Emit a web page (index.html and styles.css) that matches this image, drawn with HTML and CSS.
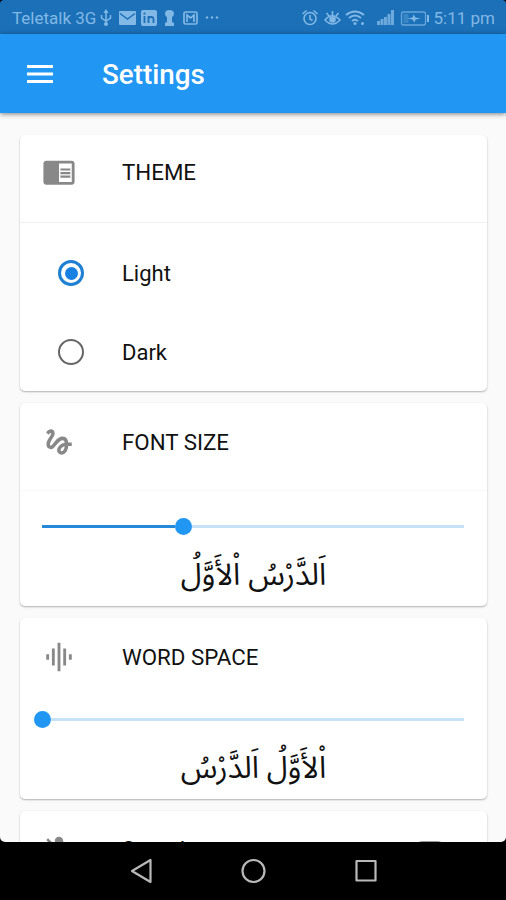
FILE: index.html
```html
<!DOCTYPE html>
<html lang="en">
<head>
<meta charset="utf-8">
<title>Settings</title>
<link rel="stylesheet" href="styles.css">
</head>
<body>
<div class="phone">
  <header class="status">
    <span class="carrier">Teletalk 3G</span>
    <svg class="notif" width="122" height="20" viewBox="0 0 122 20" fill="none" stroke="currentColor">
      <path d="M6 2v15M1.500 7v3l4.500 3 4.500-3V7" stroke-width="1.500"/><path d="M3.500 5L6 1l2.500 4z" fill="currentColor" stroke="none"/><circle cx="6" cy="16" r="2" fill="currentColor" stroke="none"/>
      <rect x="19" y="3" width="17" height="14" rx="1" fill="currentColor" stroke="none"/><path d="M20 5.500l7.500 5.500 7.500-5.500" stroke="#1b70b8" stroke-width="1.500"/>
      <rect x="41" y="2" width="16" height="16" rx="2" fill="currentColor" stroke="none"/><path d="M44.500 8v7M44.500 4.500v2M48.500 8v7M48.500 11q0-2 2.500-2t2.500 2v4" stroke="#1b70b8" stroke-width="1.800"/>
      <path d="M65 18v-3l2-1V9q-2-1-2-3.500Q65 2 69.500 2T74 5.500Q74 8 72 9v5l2 1v3z" fill="currentColor" stroke="none"/>
      <rect x="84" y="4" width="13" height="12" rx="1.500" stroke-width="1.700"/><path d="M87 14V7l3.500 3L94 7v7" stroke-width="1.700"/>
      <g fill="currentColor" stroke="none"><circle cx="107" cy="9.500" r="1.200"/><circle cx="112" cy="9.500" r="1.200"/><circle cx="117" cy="9.500" r="1.200"/></g>
    </svg>
    <svg class="system" width="130" height="20" viewBox="0 0 130 20" fill="none" stroke="currentColor" stroke-width="1.600">
      <circle cx="9" cy="10.500" r="6"/><path d="M9 7v4l2.500 1.500M1.500 6l4-3.500M16.500 6l-4-3.500"/>
      <path d="M24 12q7-8.500 15 0-7.500 8-15 0zM25.500 5l2.500 3M31.500 3v4M37.500 5L35 8"/><circle cx="31.500" cy="11.500" r="2.500" fill="currentColor"/>
      <path d="M45 7q9-7 18 0M48 10q6-5 12 0M51 13q3-2.500 6 0" stroke-width="2"/><circle cx="54" cy="15.500" r="1.500" fill="currentColor" stroke="none"/><circle cx="61.500" cy="15.500" r="1.500" fill="currentColor" stroke="none"/>
      <path d="M77.500 17v-4M81 17v-6M84.500 17V9M88 17V6M91.500 17V2" stroke-width="3" opacity=".8"/>
      <g transform="translate(1.500 0)"><rect x="99" y="4" width="24" height="13" rx="2" stroke-width="1.300" opacity=".75"/><path d="M101 6h5v9h-5z" fill="currentColor" stroke="none" opacity=".3"/><path d="M125.500 7v7" stroke-width="2"/><path d="M105 10.500l5-1 1-3 2 3 5 1-5 1-1 3-2-3z" fill="currentColor" stroke="none"/></g>
    </svg>
    <span class="clock">5:11 pm</span>
  </header>
  <div class="appbar">
    <svg class="menu" width="26" height="18" viewBox="0 0 26 18" fill="#fff"><path d="M0 0h26v3H0zM0 7.500h26v3H0zM0 15h26v3H0z"/></svg>
    <h1>Settings</h1>
  </div>
  <main>
    <section class="card theme">
      <div class="head">
        <svg class="icon" viewBox="0 0 24 24"><path d="M13 12h7v1.500h-7zm0-2.500h7V11h-7zm0 5h7V16h-7zM21 4H3c-1.100 0-2 .9-2 2v13c0 1.100.9 2 2 2h18c1.100 0 2-.9 2-2V6c0-1.100-.9-2-2-2zm0 15h-9V6h9v13z"/></svg>
        <h2>THEME</h2>
      </div>
      <div class="option"><span class="radio on"></span><span>Light</span></div>
      <div class="option"><span class="radio"></span><span>Dark</span></div>
    </section>
    <section class="card size">
      <div class="head">
        <svg class="icon" viewBox="0 0 24 24"><path d="M4.590 6.890c.7-.71 1.400-1.350 1.710-1.220.5.200 0 1.030-.3 1.520-.25.420-2.860 3.890-2.860 6.310 0 1.280.48 2.340 1.340 2.980.75.560 1.740.730 2.640.460 1.070-.31 1.950-1.400 3.060-2.770 1.210-1.490 2.830-3.440 4.080-3.440 1.630 0 1.650 1.010 1.760 1.790-3.780.640-5.380 3.670-5.380 5.370 0 1.700 1.440 3.090 3.210 3.090 1.630 0 4.290-1.330 4.690-6.100H21v-2.500h-2.470c-.15-1.650-1.090-4.200-4.030-4.200-2.250 0-4.180 1.910-4.940 2.840-.58.730-2.060 2.480-2.290 2.720-.25.300-.68.840-1.110.840-.45 0-.72-.83-.36-1.920.35-1.090 1.400-2.860 1.850-3.520.78-1.140 1.300-1.920 1.300-3.280C8.950 3.690 7.310 3 6.440 3 5.120 3 3.970 4 3.720 4.250c-.36.360-.66.660-.88.930l1.750 1.710zm9.290 11.660c-.31 0-.74-.26-.74-.72 0-.6.730-2.200 2.870-2.760-.3 2.690-1.430 3.480-2.130 3.480z"/></svg>
        <h2>FONT SIZE</h2>
      </div>
      <div class="slider"><span class="fill"></span><span class="thumb"></span><span class="rest"></span></div>
      <p class="sample" lang="ar" dir="rtl">اَلدَّرْسُ اْلأَوَّلُ</p>
    </section>
    <section class="card space">
      <div class="head">
        <svg class="icon" viewBox="0 0 24 24"><path d="M7 18h2V6H7v12zm4 4h2V2h-2v20zm-8-8h2v-4H3v4zm12 4h2V6h-2v12zm4-8v4h2v-4h-2z"/></svg>
        <h2>WORD SPACE</h2>
      </div>
      <div class="slider zero"><span class="thumb"></span><span class="rest"></span></div>
      <p class="sample" lang="ar" dir="rtl">اْلأَوَّلُ اَلدَّرْسُ</p>
    </section>
    <section class="card sound">
      <div class="head">
        <svg class="icon" viewBox="0 0 24 24"><path d="M19 11h-1.700c0 .74-.16 1.430-.43 2.050l1.230 1.230c.56-.98.9-2.090.9-3.280zm-4.020.17c0-.06.02-.11.02-.17V5c0-1.660-1.340-3-3-3S9 3.340 9 5v.18l5.980 5.990zM4.270 3L3 4.270l6.010 6.010V11c0 1.660 1.330 3 2.990 3 .22 0 .44-.03.65-.08l1.660 1.660c-.71.33-1.500.52-2.310.52-2.760 0-5.300-2.100-5.300-5.100H5c0 3.410 2.720 6.230 6 6.720V21h2v-3.280c.91-.13 1.770-.45 2.540-.9L19.730 21 21 19.730 4.270 3z"/></svg>
        <h2>Sound</h2>
        <span class="switch"></span>
      </div>
    </section>
  </main>
  <nav class="navbar">
    <svg width="506" height="58" viewBox="0 0 506 58" fill="none" stroke="#b9b9b9" stroke-width="2.200" stroke-linejoin="round">
      <path d="M132 29l18.500-11v22z"/><circle cx="253.500" cy="29" r="11"/><rect x="356.500" y="19" width="19" height="19.500"/>
    </svg>
  </nav>
</div>
</body>
</html>
```
FILE: styles.css
```css
* { box-sizing: border-box; }
body { margin: 0; background: #000; font-family: Roboto, sans-serif; }
.phone { width: 506px; height: 900px; display: flex; flex-direction: column; overflow: hidden; }
.status { height: 34px; flex: none; display: flex; align-items: center; padding: 2px 11px 0 12px; background: #1b70b8; color: #82b8e5; border-radius: 4px 4px 0 0; font-size: 17px; white-space: nowrap; }
.carrier { width: 88px; }
.notif { flex: none; }
.system { flex: none; margin-left: 79px; }
.clock { margin-left: auto; font-size: 17px; }
.appbar { position: relative; height: 79px; flex: none; display: flex; align-items: center; padding: 0 27px; gap: 49px; background: #2196f3; color: #fff; box-shadow: 0 1px 5px rgba(0,0,0,.5); }
.appbar h1 { margin: 2px 0 0; font-size: 27.800px; font-weight: 500; line-height: 36px; }
main { flex: 1; min-height: 0; overflow: hidden; display: flex; flex-direction: column; gap: 12px; padding: 22px 19px 0 20px; background: #fafafa; border-radius: 0 0 5px 5px; }
.card { flex: none; background: #fff; border-radius: 5px; box-shadow: 0 1px 2px rgba(0,0,0,.3); color: #111; font-size: 22px; }
.theme { height: 256px; }
.size { height: 203px; }
.space { height: 181px; }
.sound { height: 181px; }
.head { display: flex; align-items: center; height: 79px; padding: 0 22px; }
.theme .head, .size .head { height: 88px; padding-bottom: 13px; border-bottom: 1px solid #f0f0f0; }
.size .head { padding-bottom: 9px; border-color: #f8f8f8; }
.space .head { height: 78px; }
.sound h2 { margin-bottom: 3px; }
.icon { width: 34px; height: 34px; fill: #888; flex: none; margin-right: 46px; }
h2 { margin: 0; font-size: 22.300px; font-weight: 400; line-height: 28px; }
.option { display: flex; align-items: center; height: 79px; padding-left: 38px; gap: 38px; }
.theme .option:nth-child(2) { margin-top: 11px; }
.radio { display: flex; width: 26px; height: 26px; border: 2.500px solid #666; border-radius: 50%; margin-bottom: 1px; }
.radio.on { border-width: 3px; border-color: #1e80d2; }
.radio.on::after { content: ""; width: 13px; height: 13px; margin: auto; background: #1681e2; border-radius: 50%; }
.slider { display: flex; align-items: center; height: 20px; margin: 25px 23px 0 22px; }
.slider.zero { margin: 13px 23px 0 14px; }
.fill { width: 133px; height: 3px; background: #2489d8; }
.thumb { width: 17px; height: 17px; background: #2196f3; border-radius: 50%; }
.rest { flex: 1; height: 3px; background: #c6e2f7; }
.sample { margin: 13px 0 0; height: 52px; font-family: "Noto Sans Arabic", "Noto Naskh Arabic", "DejaVu Sans", sans-serif; font-size: 30.300px; line-height: 52px; text-align: center; }
.switch { width: 34px; height: 20px; margin: 0 18px 0 auto; border-radius: 10px; background: #999; }
.navbar { height: 58px; flex: none; background: #000; }
.navbar svg { display: block; }
```
